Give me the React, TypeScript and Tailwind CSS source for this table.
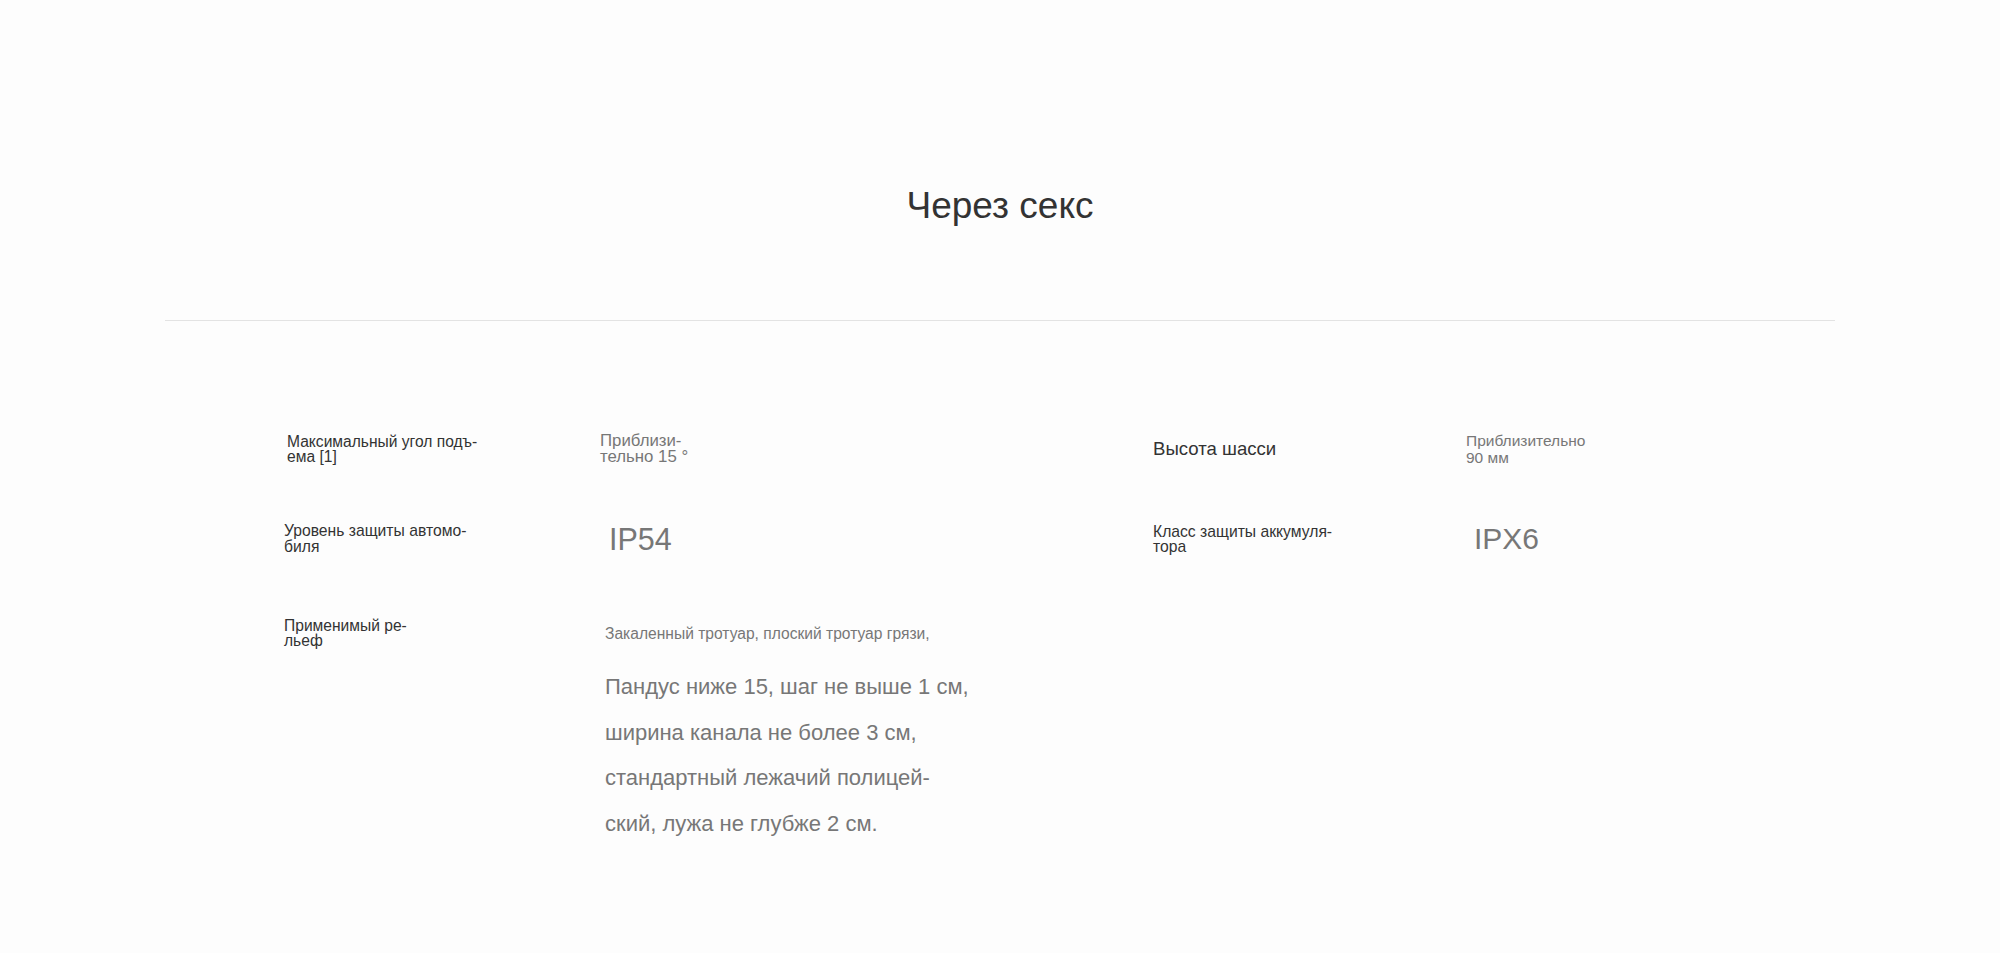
const font = "font-['Liberation_Sans',Arial,sans-serif]";

export default function App() {
  return (
    <div className={`min-h-[953px] bg-[#fdfdfd] ${font}`}>
      <div className="mx-auto w-[1670px]">
        {/* заголовок */}
        <h2 className="pt-[187px] text-center text-[37px] leading-none font-normal text-[#333]">Через секс</h2>
        <div className="mt-[96px] border-b border-[#e3e3e3]" />

        {/* характеристики */}
        <div className="grid grid-cols-[320px_549px_313px_1fr] pt-[83px] pl-[119px] text-[#333]">
          <div className="flex h-[90px] items-center">
            <p className="ml-[3px] text-[15.6px] leading-[15px]">
              Максимальный угол подъ-
              <br />
              ема [1]
            </p>
          </div>
          <div className="flex h-[90px] items-center">
            <p className="ml-[-4px] text-[16.8px] leading-[16px] text-[#777]">
              Приблизи-
              <br />
              тельно 15 °
            </p>
          </div>
          <div className="flex h-[90px] items-center">
            <p className="text-[18.6px] leading-none">Высота шасси</p>
          </div>
          <div className="flex h-[90px] items-center">
            <p className="text-[15.5px] leading-[17.5px] text-[#777]">
              Приблизительно
              <br />
              90 мм
            </p>
          </div>

          <div className="flex h-[90px] items-center">
            <p className="text-[15.7px] leading-[16px]">
              Уровень защиты автомо-
              <br />
              биля
            </p>
          </div>
          <div className="flex h-[90px] items-center">
            <p className="ml-[5px] text-[30.5px] leading-none text-[#777]">IP54</p>
          </div>
          <div className="flex h-[90px] items-center">
            <p className="text-[15.7px] leading-[15px]">
              Класс защиты аккумуля-
              <br />
              тора
            </p>
          </div>
          <div className="flex h-[90px] items-center">
            <p className="ml-[8px] text-[30px] leading-none text-[#777]">IPX6</p>
          </div>

          <div className="pt-[34px]">
            <p className="text-[15.6px] leading-[15px]">
              Применимый ре-
              <br />
              льеф
            </p>
          </div>
          <div className="col-span-3 pt-[40px] pl-[1px] text-[#777]">
            <p className="text-[15.6px] leading-[20px]">Закаленный тротуар, плоский тротуар грязи,</p>
            <p className="mt-[20px] text-[22px] leading-[45.5px]">
              Пандус ниже 15, шаг не выше 1 см,
              <br />
              ширина канала не более 3 см,
              <br />
              стандартный лежачий полицей-
              <br />
              ский, лужа не глубже 2 см.
            </p>
          </div>
        </div>
      </div>
    </div>
  );
}
